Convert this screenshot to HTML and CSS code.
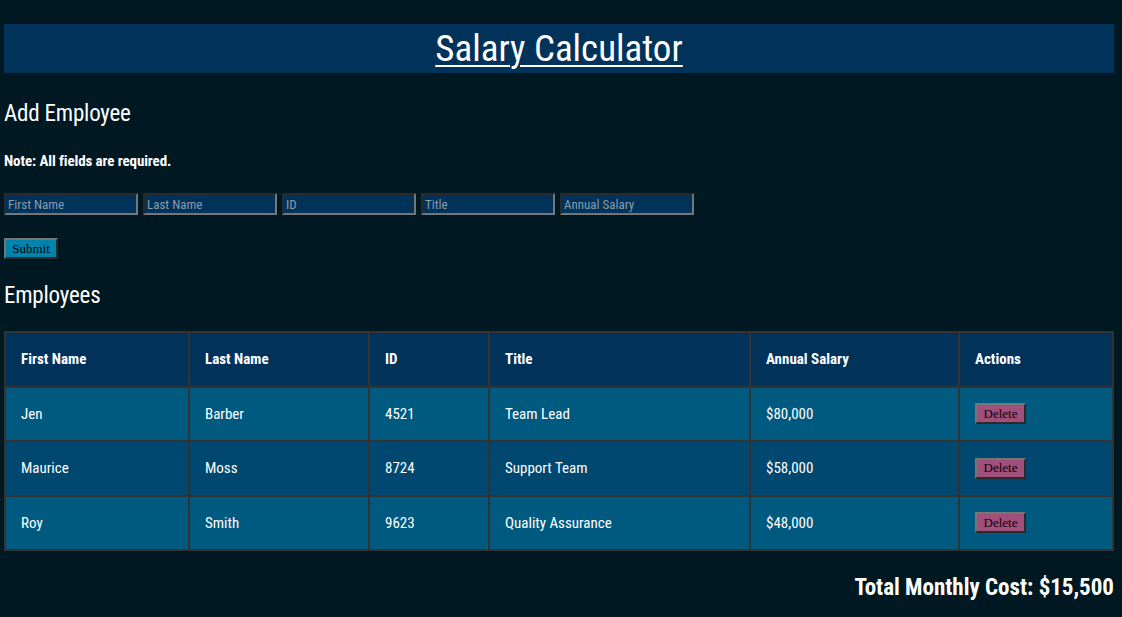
FILE: index.html
```html
<!DOCTYPE html>
<html lang="en">
<head>
<meta charset="utf-8">
<title>Salary Calculator</title>
<link rel="stylesheet" href="styles.css">
</head>
<body>
<div class="page">
  <header class="banner"><h1 class="title">Salary Calculator</h1></header>
  <h2 class="section">Add Employee</h2>
  <p class="note">Note: All fields are required.</p>
  <form class="form">
    <div class="fields">
      <input class="field" type="text" placeholder="First Name">
      <input class="field" type="text" placeholder="Last Name">
      <input class="field" type="text" placeholder="ID">
      <input class="field" type="text" placeholder="Title">
      <input class="field" type="text" placeholder="Annual Salary">
    </div>
    <button class="submit" type="button">Submit</button>
  </form>
  <h2 class="section emp">Employees</h2>
  <table class="table">
    <colgroup>
      <col class="c1"><col class="c2"><col class="c3"><col class="c4"><col class="c5"><col class="c6">
    </colgroup>
    <thead>
      <tr><th>First Name</th><th>Last Name</th><th>ID</th><th>Title</th><th>Annual Salary</th><th>Actions</th></tr>
    </thead>
    <tbody>
      <tr class="odd"><td>Jen</td><td>Barber</td><td>4521</td><td>Team Lead</td><td>$80,000</td><td><button class="del" type="button">Delete</button></td></tr>
      <tr class="even"><td>Maurice</td><td>Moss</td><td>8724</td><td>Support Team</td><td>$58,000</td><td><button class="del" type="button">Delete</button></td></tr>
      <tr class="odd"><td>Roy</td><td>Smith</td><td>9623</td><td>Quality Assurance</td><td>$48,000</td><td><button class="del" type="button">Delete</button></td></tr>
    </tbody>
  </table>
  <p class="total">Total Monthly Cost: $15,500</p>
</div>
</body>
</html>
```
FILE: styles.css
```css
html, body {
  margin: 0;
  padding: 0;
  background: #001821;
}
body {
  font-family: "Roboto Condensed", "DejaVu Sans Condensed", sans-serif;
  font-stretch: condensed;
  color: #ffffff;
}
.page {
  padding: 24px 8px 0 4px;
}
.banner {
  background: #00325a;
  height: 49px;
  display: flex;
  align-items: center;
  justify-content: center;
}
.title {
  margin: 0;
  font-size: 37px;
  font-weight: normal;
  text-decoration: underline;
  text-decoration-thickness: 2px;
  text-underline-offset: 4px;
  line-height: 49px;
}
.section {
  margin: 26px 0 0 0;
  font-size: 23px;
  font-weight: normal;
  letter-spacing: -0.2px;
  line-height: 30px;
}
.note {
  margin: 22px 0 0 0;
  font-size: 15px;
  font-weight: bold;
  letter-spacing: -0.1px;
  line-height: 20px;
}
.form {
  margin-top: 22px;
}
.fields {
  display: flex;
  gap: 5px;
}
.field {
  width: 134px;
  height: 22px;
  box-sizing: border-box;
  background: #00325a;
  border: 2px solid;
  border-color: #2a2a2a #767676 #767676 #2a2a2a;
  color: #fff;
  font-family: inherit;
  font-size: 13px;
  padding: 1px 2px;
  margin: 0;
}
.field::placeholder {
  color: #8a9cab;
}
.submit {
  display: block;
  margin-top: 23px;
  width: 54px;
  height: 21px;
  box-sizing: border-box;
  background: #0083ad;
  border: 2px solid;
  border-color: #767676 #2a2a2a #2a2a2a #767676;
  font-family: "Liberation Serif", serif;
  font-size: 13px;
  color: #000;
  padding: 0;
}
.emp {
  margin-top: 22px;
}
.table {
  margin-top: 20px;
  width: 1108px;
  border-collapse: collapse;
  table-layout: fixed;
  border: 2px solid #333;
}
.c1 { width: 184px; }
.c2 { width: 180px; }
.c3 { width: 120px; }
.c4 { width: 261px; }
.c5 { width: 209px; }
.c6 { width: 154px; }
.table th, .table td {
  border: 2px solid #333;
  height: 54.5px;
  padding: 0 15px;
  text-align: left;
  font-size: 15px;
  box-sizing: border-box;
}
.table th {
  background: #00325a;
  font-weight: bold;
}
.odd td { background: #005a80; }
.even td { background: #004870; }
.del {
  width: 51px;
  height: 21px;
  box-sizing: border-box;
  background: #a0507a;
  border: 2px solid;
  border-color: #767676 #2a2a2a #2a2a2a #767676;
  font-family: "Liberation Serif", serif;
  font-size: 13px;
  color: #10000a;
  padding: 0;
}
.total {
  margin: 22px 0 0 0;
  text-align: right;
  font-size: 23px;
  font-weight: bold;
  line-height: 30px;
}
```
